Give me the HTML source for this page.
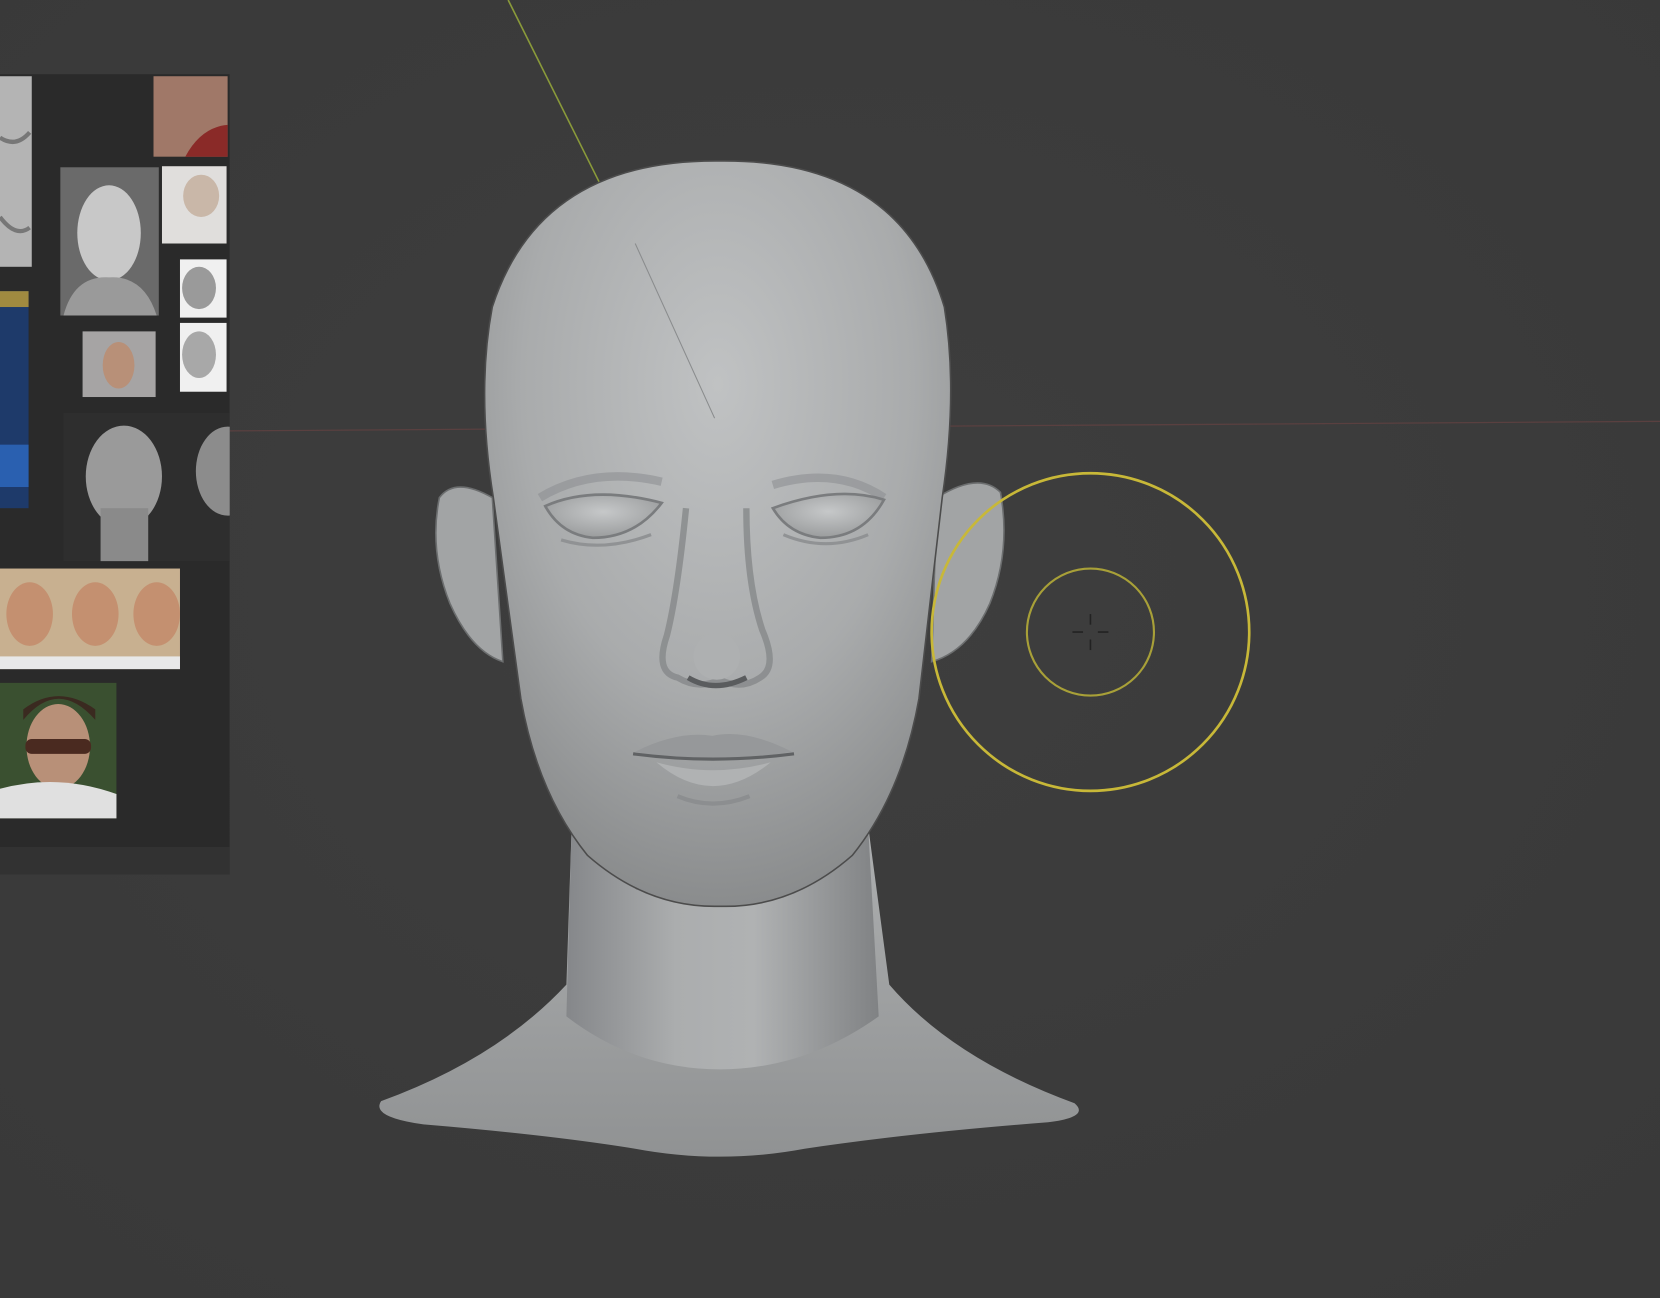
<!DOCTYPE html>
<html><head><meta charset="utf-8"><style>
html,body{margin:0;padding:0;background:#3b3b3b;width:1660px;height:1298px;overflow:hidden}
svg{display:block}
</style></head><body>
<svg width="1660" height="1298" viewBox="0 0 1568 1226" preserveAspectRatio="none">
<defs>
<radialGradient id="bg" cx="0.5" cy="0.45" r="0.7">
<stop offset="0" stop-color="#3e3e3e"/><stop offset="1" stop-color="#393939"/></radialGradient>
<radialGradient id="skin" cx="0.5" cy="0.3" r="0.7">
<stop offset="0" stop-color="#c0c2c3"/><stop offset="0.6" stop-color="#a9abac"/><stop offset="1" stop-color="#8a8c8d"/></radialGradient>
<linearGradient id="neck" x1="0" y1="0" x2="1" y2="0">
<stop offset="0" stop-color="#85878a"/><stop offset="0.35" stop-color="#abadae"/><stop offset="0.6" stop-color="#b0b2b3"/><stop offset="1" stop-color="#808284"/></linearGradient>
<linearGradient id="sh" x1="0" y1="0" x2="0" y2="1">
<stop offset="0" stop-color="#adafb0"/><stop offset="1" stop-color="#909293"/></linearGradient>
<radialGradient id="eye" cx="0.5" cy="0.4" r="0.6"><stop offset="0" stop-color="#c6c8c9"/><stop offset="1" stop-color="#9a9c9d"/></radialGradient>
<clipPath id="pc"><rect x="0" y="70" width="217" height="756"/></clipPath>
</defs>
<rect width="1568" height="1226" fill="url(#bg)"/>
<line x1="217" y1="407" x2="1568" y2="398" stroke="#5a4040" stroke-width="1.2"/>
<line x1="480" y1="0" x2="570" y2="180" stroke="#8a9a3a" stroke-width="1.5"/>
<g clip-path="url(#pc)">
<rect x="0" y="70" width="217" height="756" fill="#2a2a2a"/>
<rect x="0" y="800" width="217" height="26" fill="#323232"/>
<rect x="0" y="72" width="30" height="180" fill="#b4b4b4"/>
<path d="M0 130 Q15 140 28 125 M0 205 Q15 225 28 215" stroke="#777" stroke-width="4" fill="none"/>
<rect x="145" y="72" width="70" height="76" fill="#a07868"/>
<path d="M175 148 Q190 120 215 118 L215 148Z" fill="#8a2a28"/>
<rect x="57" y="158" width="93" height="140" fill="#6a6a6a"/>
<ellipse cx="103" cy="220" rx="30" ry="45" fill="#c8c8c8"/>
<path d="M60 298 Q70 260 103 262 Q136 260 148 298Z" fill="#9a9a9a"/>
<rect x="153" y="157" width="61" height="73" fill="#e0dedc"/>
<ellipse cx="190" cy="185" rx="17" ry="20" fill="#c9b7a8"/>
<rect x="170" y="245" width="44" height="55" fill="#f0f0f0"/>
<ellipse cx="188" cy="272" rx="16" ry="20" fill="#9a9a9a"/>
<rect x="170" y="305" width="44" height="65" fill="#f0f0f0"/>
<ellipse cx="188" cy="335" rx="16" ry="22" fill="#a8a8a8"/>
<rect x="78" y="313" width="69" height="62" fill="#a6a4a4"/>
<ellipse cx="112" cy="345" rx="15" ry="22" fill="#b89078"/>
<rect x="0" y="275" width="27" height="205" fill="#1e3a6a"/>
<rect x="0" y="275" width="27" height="15" fill="#a08a40"/>
<rect x="0" y="420" width="27" height="40" fill="#2a60b0"/>
<rect x="60" y="390" width="157" height="140" fill="#2e2e2e"/>
<ellipse cx="117" cy="450" rx="36" ry="48" fill="#9a9a9a"/>
<rect x="95" y="480" width="45" height="50" fill="#8a8a8a"/>
<ellipse cx="215" cy="445" rx="30" ry="42" fill="#8c8c8c"/>
<rect x="0" y="537" width="170" height="95" fill="#c8b090"/>
<ellipse cx="28" cy="580" rx="22" ry="30" fill="#c49070"/>
<ellipse cx="90" cy="580" rx="22" ry="30" fill="#c49070"/>
<ellipse cx="148" cy="580" rx="22" ry="30" fill="#c49070"/>
<rect x="0" y="620" width="170" height="12" fill="#e8e8e8"/>
<rect x="0" y="645" width="110" height="128" fill="#3a5030"/>
<ellipse cx="55" cy="705" rx="30" ry="40" fill="#b89078"/>
<path d="M22 680 Q55 640 90 680 L90 670 Q55 645 22 670Z" fill="#3a2a20"/>
<rect x="24" y="698" width="62" height="14" rx="6" fill="#4a2a20"/>
<path d="M0 773 L0 745 Q55 730 110 750 L110 773Z" fill="#e0e0e0"/>
</g>
<path d="M540 780 L535 930 Q470 1000 360 1040 Q350 1055 400 1062 Q520 1072 600 1085 Q680 1100 760 1085 Q860 1070 990 1060 Q1030 1055 1015 1042 Q900 1000 840 930 L820 780Z" fill="url(#sh)"/>
<path d="M540 780 L535 960 Q600 1010 680 1010 Q760 1010 830 960 L820 780Z" fill="url(#neck)"/>
<path d="M465 470 Q430 450 415 470 Q405 520 425 570 Q445 615 475 625Z" fill="#a2a4a5" stroke="#6c6e6f" stroke-width="1.5"/>
<path d="M885 470 Q925 445 945 465 Q955 520 935 570 Q915 615 880 625Z" fill="#a2a4a5" stroke="#6c6e6f" stroke-width="1.5"/>
<path d="M680 152 Q850 150 892 290 Q905 370 890 470 Q880 560 868 660 Q852 750 805 808 Q748 858 680 856 Q612 858 555 808 Q508 750 492 660 Q478 560 466 470 Q450 370 465 290 Q510 150 680 152Z" fill="url(#skin)" stroke="#4c4c4c" stroke-width="1.5"/>
<line x1="600" y1="230" x2="675" y2="395" stroke="#8a8c8d" stroke-width="1"/>
<path d="M510 470 Q560 440 625 455 M730 458 Q790 440 835 470" stroke="#8e9092" stroke-width="8" fill="none" opacity="0.6"/>
<path d="M515 478 Q560 458 625 475 Q600 508 560 508 Q530 505 515 478Z" fill="url(#eye)" stroke="#7a7c7e" stroke-width="2.5"/>
<path d="M730 480 Q790 458 835 472 Q815 508 775 508 Q745 505 730 480Z" fill="url(#eye)" stroke="#7a7c7e" stroke-width="2.5"/>
<path d="M530 510 Q570 522 615 505 M740 505 Q780 522 820 505" stroke="#909294" stroke-width="3" fill="none"/>
<path d="M648 480 Q640 560 630 600 Q618 635 640 640 Q660 652 680 642 Q700 652 718 640 Q735 630 720 595 Q705 550 705 480" fill="none" stroke="#86888a" stroke-width="6" opacity="0.8"/>
<ellipse cx="677" cy="620" rx="22" ry="22" fill="#aeb0b1"/>
<path d="M650 640 Q675 655 705 640" stroke="#5a5c5e" stroke-width="5" fill="none"/>
<path d="M600 710 Q640 690 673 695 Q705 688 748 710 Q700 718 673 716 Q640 718 600 710Z" fill="#96989a"/>
<path d="M598 712 Q673 722 750 712" stroke="#606264" stroke-width="3" fill="none"/>
<path d="M620 720 Q673 765 728 720 Q673 735 620 720Z" fill="#b0b2b3"/>
<path d="M640 752 Q673 766 708 752" stroke="#8c8e90" stroke-width="4" fill="none"/>
<circle cx="1030" cy="597" r="150" fill="none" stroke="#c8b838" stroke-width="2.5"/>
<circle cx="1030" cy="597" r="60" fill="none" stroke="#a8a038" stroke-width="2"/>
<g stroke="#222" stroke-width="1.5">
<line x1="1030" y1="580" x2="1030" y2="590"/><line x1="1030" y1="604" x2="1030" y2="614"/>
<line x1="1013" y1="597" x2="1023" y2="597"/><line x1="1037" y1="597" x2="1047" y2="597"/>
</g>
</svg>
</body></html>
